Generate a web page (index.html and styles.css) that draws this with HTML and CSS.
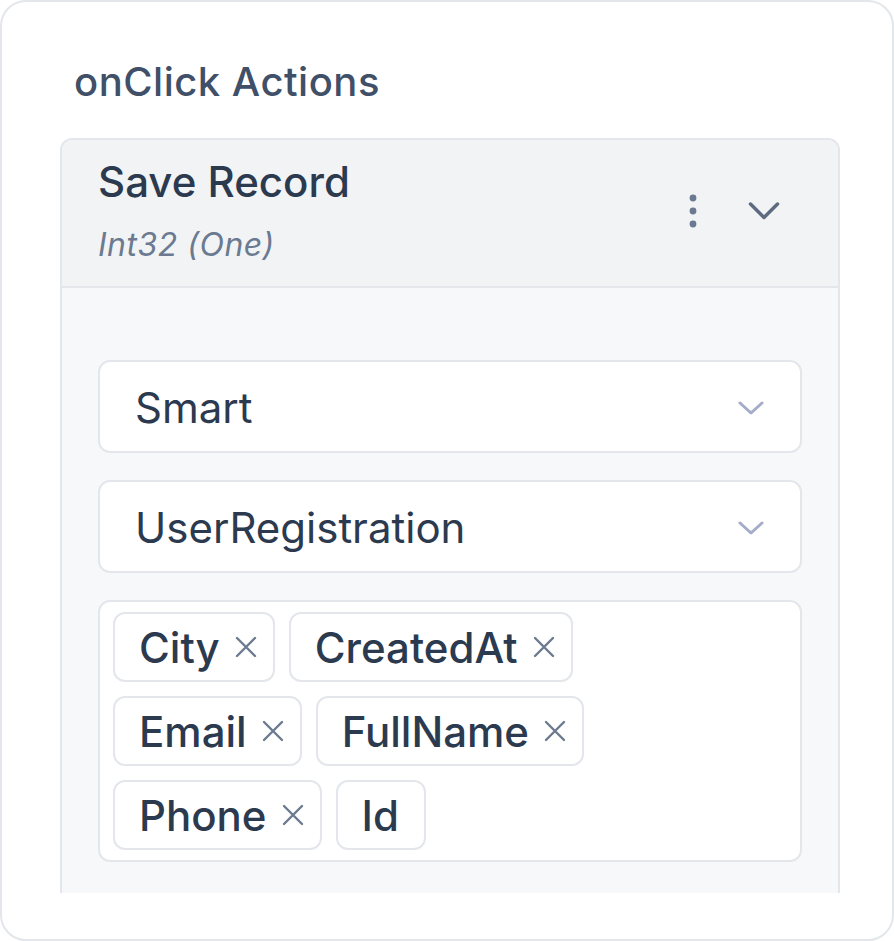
FILE: index.html
```html
<!DOCTYPE html>
<html>
<head>
<meta charset="utf-8">
<link rel="stylesheet" href="styles.css">
</head>
<body>
<div class="card">
  <h2 class="section-title">onClick Actions</h2>
  <div class="clip">
    <div class="accordion">
      <div class="acc-header">
        <div class="acc-titles">
          <div class="acc-title">Save Record</div>
          <div class="acc-sub">Int32 (One)</div>
        </div>
        <div class="acc-icons">
          <svg class="kebab" width="10" height="34" viewBox="0 0 10 34"><circle cx="5" cy="4" r="3.4"/><circle cx="5" cy="17" r="3.4"/><circle cx="5" cy="30" r="3.4"/></svg>
          <svg class="chev" width="32" height="20" viewBox="0 0 32 20"><path d="M2.5 3 L16 16.5 L29.5 3"/></svg>
        </div>
      </div>
      <div class="acc-body">
        <div class="select">
          <span class="select-text">Smart</span>
          <svg class="select-chev" width="26" height="14" viewBox="0 0 26 14"><path d="M2 2 L13 12 L24 2"/></svg>
        </div>
        <div class="select">
          <span class="select-text">UserRegistration</span>
          <svg class="select-chev" width="26" height="14" viewBox="0 0 26 14"><path d="M2 2 L13 12 L24 2"/></svg>
        </div>
        <div class="multi">
          <div class="tags">
            <span class="tag">City<svg class="x" viewBox="0 0 24 24"><path d="M3 3 L21 21 M21 3 L3 21"/></svg></span>
            <span class="tag">CreatedAt<svg class="x" viewBox="0 0 24 24"><path d="M3 3 L21 21 M21 3 L3 21"/></svg></span>
            <span class="tag">Email<svg class="x" viewBox="0 0 24 24"><path d="M3 3 L21 21 M21 3 L3 21"/></svg></span>
            <span class="tag">FullName<svg class="x" viewBox="0 0 24 24"><path d="M3 3 L21 21 M21 3 L3 21"/></svg></span>
            <span class="tag">Phone<svg class="x" viewBox="0 0 24 24"><path d="M3 3 L21 21 M21 3 L3 21"/></svg></span>
            <span class="tag tag-plain">Id</span>
          </div>
        </div>
      </div>
    </div>
  </div>
</div>
</body>
</html>
```
FILE: styles.css
```css
* { box-sizing: border-box; }
html, body { margin: 0; padding: 0; background: #ffffff; }
body { font-family: Inter, "Noto Sans", sans-serif; color: #2c3a4f; }

.card {
  width: 894px;
  height: 941px;
  border: 2px solid #e3e6ea;
  border-radius: 26px;
  background: #fff;
  padding: 56px 52px 0 58px;
}

.section-title {
  margin: 0 0 32px 14px;
  font-size: 40px;
  line-height: 48px;
  font-weight: 500;
  letter-spacing: 0.5px;
  color: #3f5068;
}

.clip {
  height: 755px;
  overflow: hidden;
}

.accordion {
  border: 2px solid #e3e6ea;
  border-radius: 12px;
  overflow: hidden;
  background: #f7f8fa;
}

.acc-header {
  display: flex;
  align-items: center;
  justify-content: space-between;
  background: #f1f3f5;
  border-bottom: 2px solid #e3e6ea;
  padding: 17px 58px 21px 36px;
}

.acc-titles { display: flex; flex-direction: column; gap: 18px; }

.acc-title {
  font-size: 42px;
  line-height: 50px;
  font-weight: 500;
  color: #2c3a4f;
}

.acc-sub {
  font-size: 32px;
  line-height: 40px;
  font-style: italic;
  color: #6b7a90;
  letter-spacing: 0.5px;
}

.acc-icons {
  display: flex;
  align-items: center;
  gap: 50px;
}

.kebab { fill: #6b7a90; }
.chev { fill: none; stroke: #5d6b80; stroke-width: 3.5; stroke-linecap: round; stroke-linejoin: round; }

.acc-body {
  padding: 72px 36px 80px 36px;
  display: flex;
  flex-direction: column;
  gap: 27px;
}

.select {
  height: 93px;
  border: 2px solid #e3e6ea;
  border-radius: 12px;
  background: #fff;
  display: flex;
  align-items: center;
  justify-content: space-between;
  padding: 2px 36px 0 35px;
}

.select-text {
  font-size: 42px;
  color: #2c3a4f;
}

.select-chev { fill: none; stroke: #a4acca; stroke-width: 3; stroke-linecap: round; stroke-linejoin: round; }

.multi {
  border: 2px solid #e3e6ea;
  border-radius: 12px;
  background: #fff;
  padding: 10px 13px 10px 13px;
}

.tags {
  max-width: 640px;
  display: flex;
  flex-wrap: wrap;
  gap: 14px;
}

.tag {
  height: 70px;
  border: 2px solid #e3e6ea;
  border-radius: 12px;
  display: inline-flex;
  align-items: center;
  gap: 14px;
  padding: 0 15px 0 24px;
  font-size: 42px;
  font-weight: 500;
  color: #2c3a4f;
}

.tag-plain { padding: 0 25px 0 24px; }

.x { width: 24px; height: 24px; fill: none; stroke: #6b7a90; stroke-width: 2.4; stroke-linecap: round; }
```
